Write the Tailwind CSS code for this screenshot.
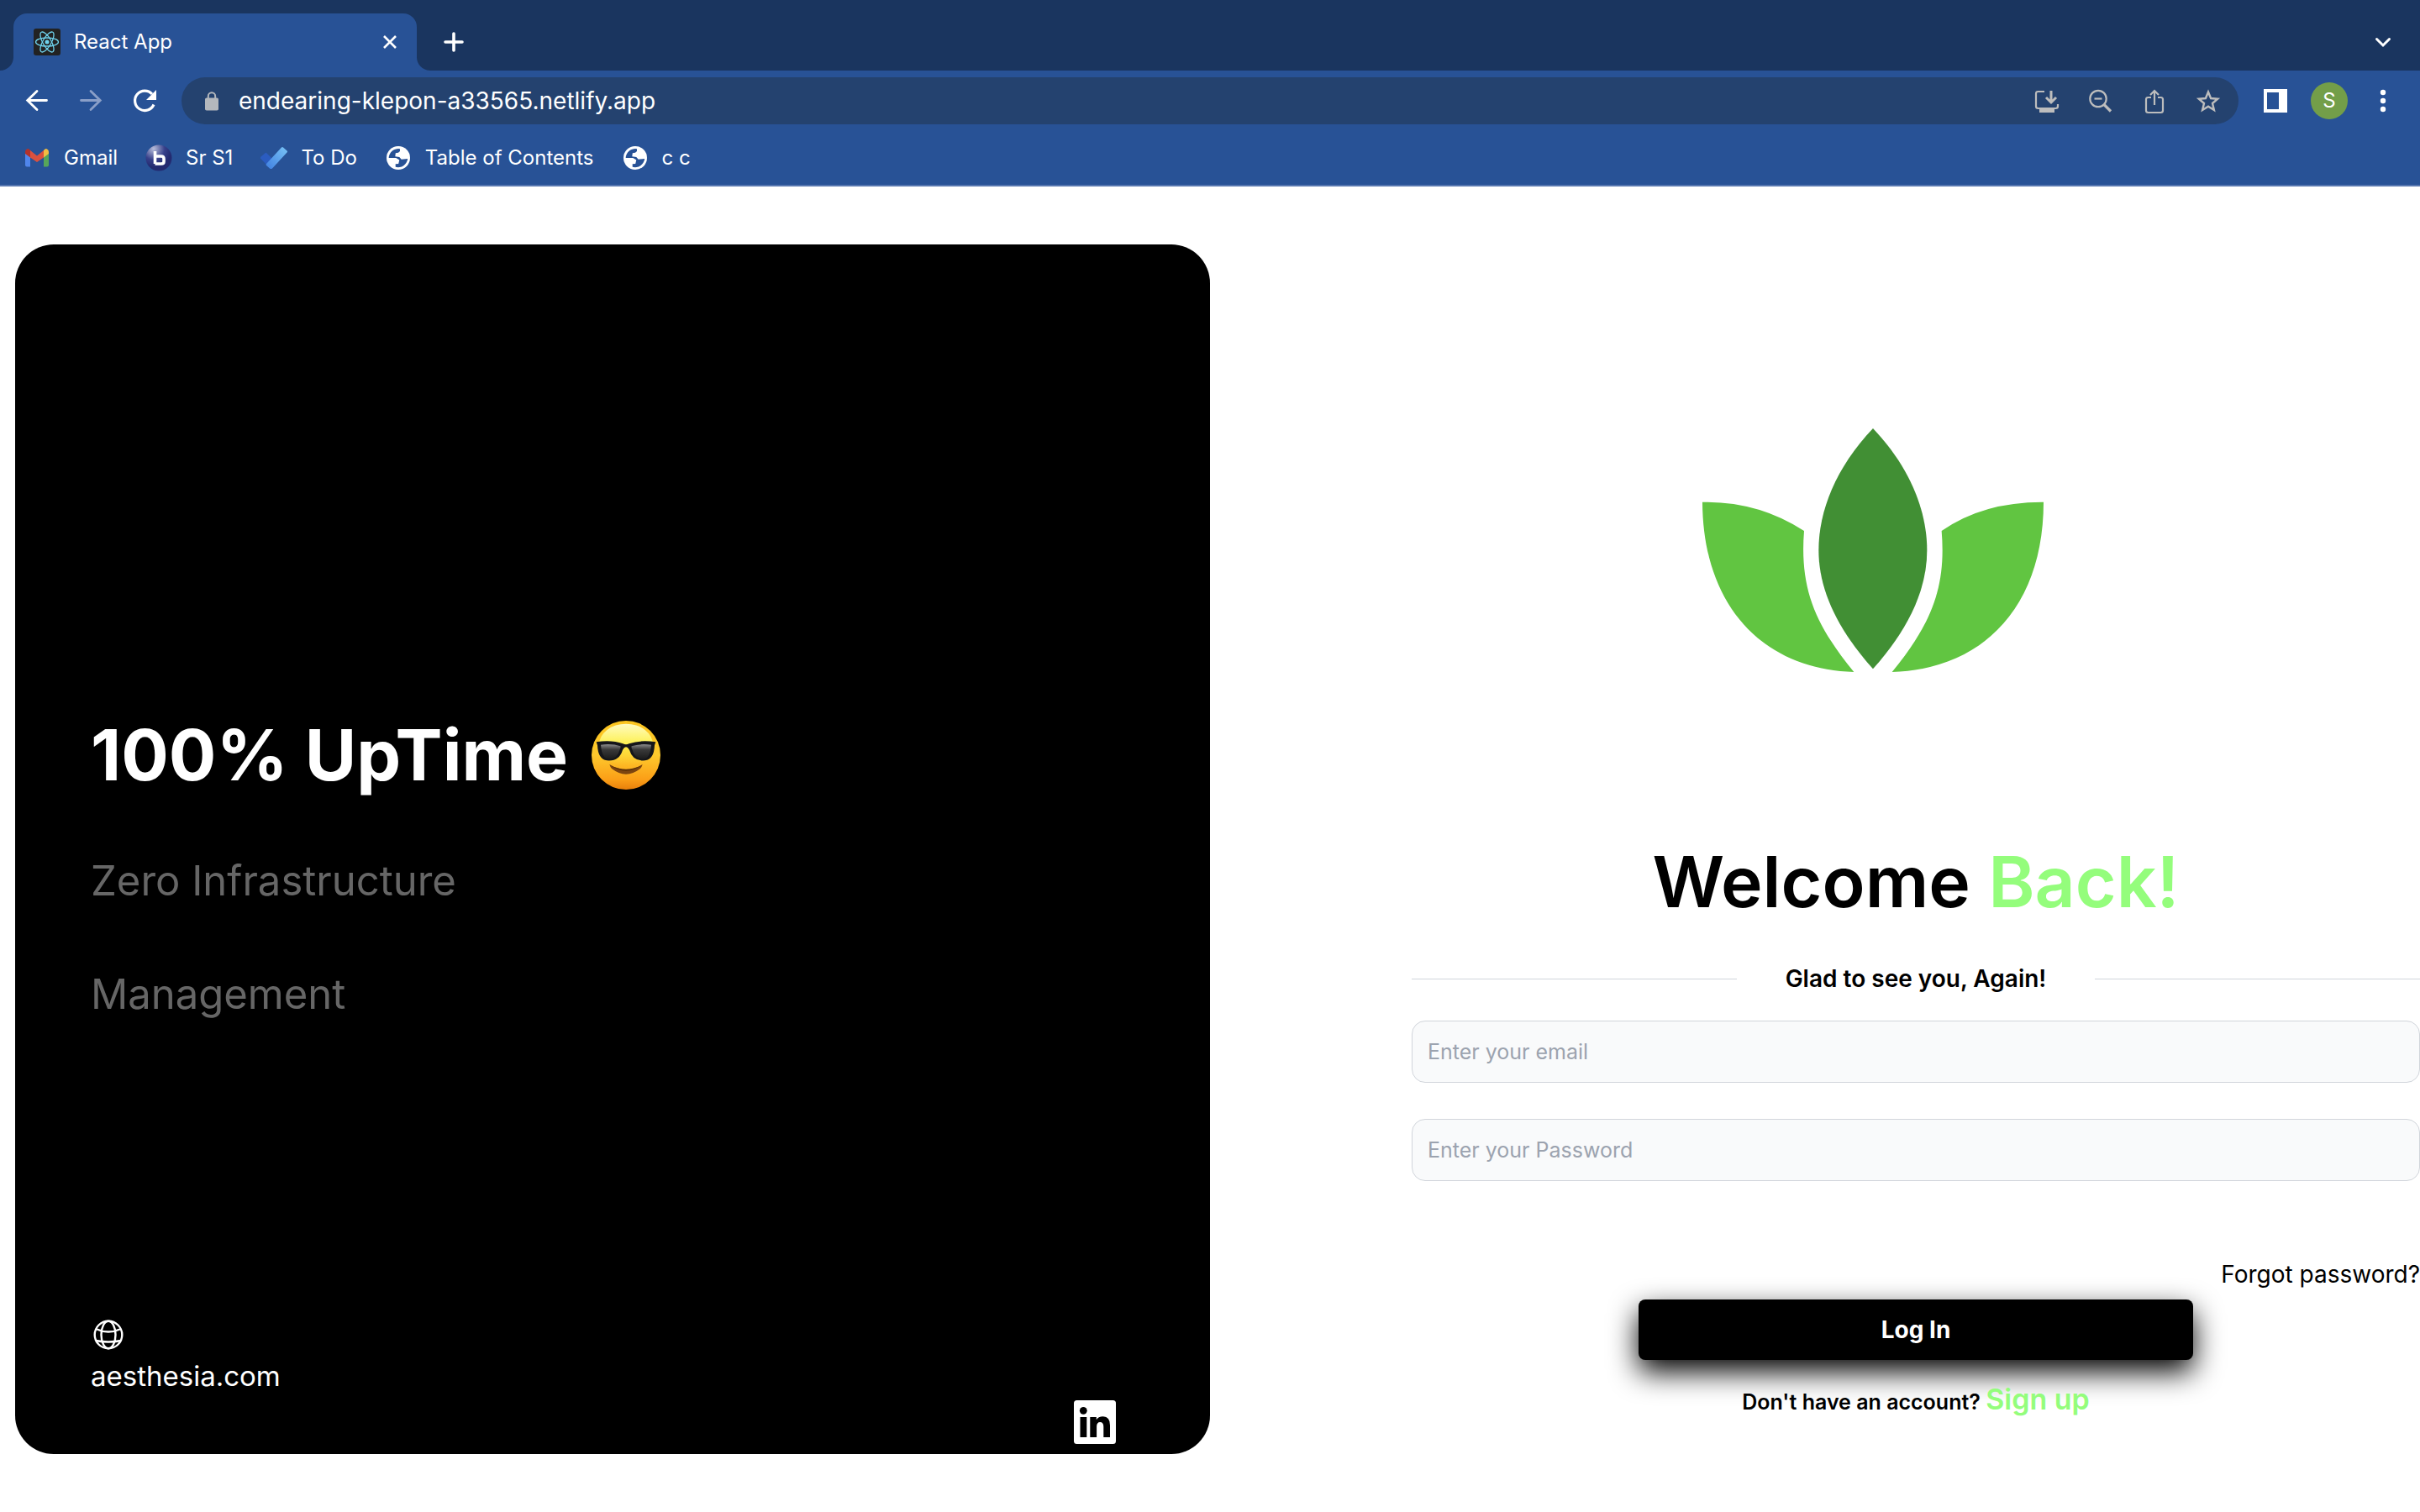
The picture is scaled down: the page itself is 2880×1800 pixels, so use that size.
<!DOCTYPE html>
<html lang="en">
<head>
<meta charset="utf-8">
<title>React App</title>
<script src="https://cdn.jsdelivr.net/npm/@tailwindcss/browser@4"></script>
</head>
<body class="flex min-h-screen flex-col bg-white font-['Inter',sans-serif] text-black">

<!-- Browser chrome -->
<header class="border-b-2 border-[#5777b0] bg-[#285296] text-white">
  <!-- Tab strip -->
  <div class="flex h-[84px] items-end bg-[#1a355f] pl-4 pr-7">
    <div class="relative flex h-[68px] w-[480px] items-center rounded-t-2xl bg-[#285296] pl-6 pr-5 text-[24px]">
      <svg class="absolute -left-4 bottom-0 size-4" viewBox="0 0 16 16" fill="#285296"><path d="M16 0v16H0A16 16 0 0 0 16 0z"/></svg>
      <svg class="absolute -right-4 bottom-0 size-4" viewBox="0 0 16 16" fill="#285296"><path d="M0 0v16h16A16 16 0 0 1 0 0z"/></svg>
      <svg class="size-8 shrink-0" viewBox="0 0 32 32" fill="none" stroke="#6fd3ee" stroke-width="1.3">
        <rect width="32" height="32" rx="3" fill="#222" stroke="none"/>
        <ellipse cx="16" cy="16" rx="13.5" ry="5"/>
        <ellipse cx="16" cy="16" rx="13.5" ry="5" transform="rotate(60 16 16)"/>
        <ellipse cx="16" cy="16" rx="13.5" ry="5" transform="rotate(120 16 16)"/>
        <circle cx="16" cy="16" r="2.5" fill="#6fd3ee" stroke="none"/>
      </svg>
      <span class="ml-4 flex-1">React App</span>
      <button class="flex size-6 items-center justify-center" aria-label="Close tab">
        <svg class="size-4" viewBox="0 0 16 16" stroke="currentColor" stroke-width="2.6"><path d="M1 1l14 14M15 1L1 15"/></svg>
      </button>
    </div>
    <button class="ml-7 flex h-[68px] w-8 items-center justify-center" aria-label="New tab">
      <svg class="size-6" viewBox="0 0 24 24" stroke="currentColor" stroke-width="3.6" stroke-linecap="round"><path d="M12 2v20M2 12h20"/></svg>
    </button>
    <button class="ml-auto flex h-[68px] w-8 items-center justify-center" aria-label="Search tabs">
      <svg class="size-5" viewBox="0 0 20 20" fill="none" stroke="currentColor" stroke-width="3" stroke-linecap="round"><path d="M2.5 6.5l7.500 7.500 7.500-7.500"/></svg>
    </button>
  </div>

  <!-- Toolbar -->
  <div class="flex h-[72px] items-center pl-7 pr-7">
    <nav class="flex gap-8" aria-label="History">
      <button aria-label="Back"><svg class="size-8" viewBox="0 0 32 32" fill="none" stroke="#fff" stroke-width="2.8" stroke-linecap="round"><path d="M27.500 15.500H5M16 4.500L4.700 15.500 16 26.500"/></svg></button>
      <button aria-label="Forward"><svg class="size-8" viewBox="0 0 32 32" fill="none" stroke="#8a9fc8" stroke-width="2.8" stroke-linecap="round"><path d="M4.500 15.500H27M16 4.500l11.300 11L16 26.500"/></svg></button>
      <button aria-label="Reload"><svg class="size-8" viewBox="0 0 32 32" fill="none" stroke="#fff" stroke-width="3.200"><path d="M27 20.500A11.700 11.700 0 1 1 25 8"/><path d="M30 3v12H18z" fill="#fff" stroke="none"/></svg></button>
    </nav>
    <div class="ml-7 flex h-14 flex-1 items-center rounded-full bg-[#24426f] pl-5 pr-5">
      <svg class="size-8 shrink-0" viewBox="0 0 32 32"><rect x="8" y="12.500" width="16" height="15" rx="1.800" fill="#b4b8bd"/><path d="M11.800 14v-3.500a4.200 4.200 0 0 1 8.400 0V14" fill="none" stroke="#b4b8bd" stroke-width="2"/></svg>
      <input type="text" aria-label="Address" value="endearing-klepon-a33565.netlify.app" class="ml-4 min-w-0 flex-1 bg-transparent text-[28px] outline-none">
      <div class="flex gap-8 text-[#bdbdbd]">
        <button aria-label="Install app"><svg class="size-8" viewBox="0 0 32 32" fill="none" stroke="currentColor" stroke-width="2.200"><path d="M13 5H5.500Q3 5 3 7.500v15Q3 25 5.500 25h21q2.500 0 2.500-2.500V20"/><path d="M21 4v13M15 12l6 6 6-6" stroke-width="3"/><path d="M7 25h18v5H7z" fill="currentColor" stroke="none"/></svg></button>
        <button aria-label="Zoom"><svg class="size-8" viewBox="0 0 32 32" fill="none" stroke="currentColor" stroke-width="2.200"><circle cx="13" cy="13.500" r="9.700"/><path d="M8.500 13.500h9"/><path d="M20 20.500l8 8" stroke-width="3.200"/></svg></button>
        <button aria-label="Share"><svg class="size-8" viewBox="0 0 32 32" fill="none" stroke="currentColor" stroke-width="2.200"><path d="M12 12H8.500Q6 12 6 14.500v13Q6 30 8.500 30h15q2.500 0 2.500-2.500v-13Q26 12 23.500 12H20"/><path d="M16 21V4.500M11 9l5-5 5 5"/></svg></button>
        <button aria-label="Bookmark"><svg class="size-8" viewBox="0 0 32 32" fill="none" stroke="currentColor" stroke-width="2.400"><path d="M16 5.500l3.100 7.500 8.100.7-6.200 5.300 1.900 8L16 22.700 9.100 27l1.900-8-6.200-5.300 8.100-.7z"/></svg></button>
      </div>
    </div>
    <div class="ml-7 flex items-center gap-[26px]">
      <button aria-label="Side panel"><svg class="size-8" viewBox="0 0 32 32"><path fill="#fff" fill-rule="evenodd" d="M2 2h28v28H2zM6 6v20h14V6z"/></svg></button>
      <button class="flex size-11 items-center justify-center rounded-full bg-[#739e49] text-[24px]" aria-label="Profile">S</button>
      <button aria-label="Menu"><svg class="size-8" viewBox="0 0 32 32" fill="#fff"><circle cx="16" cy="6" r="3.200"/><circle cx="16" cy="16" r="3.200"/><circle cx="16" cy="26" r="3.200"/></svg></button>
    </div>
  </div>

  <!-- Bookmarks -->
  <nav class="flex h-16 items-center gap-[33px] px-7 text-[24px]" aria-label="Bookmarks">
    <a href="#" class="flex items-center gap-4">
      <svg class="size-8" viewBox="0 0 32 32"><path d="M2 11h6v15.500H4q-2 0-2-2z" fill="#5086ec"/><path d="M24 11h6v13.500q0 2-2 2h-4z" fill="#57a65a"/><path d="M8 7l8 6.500L24 7v8.500L16 21l-8-5.500z" fill="#d9513f"/><path d="M2 9q0-3 3-4 1.500 0 3 2v8.500L2 11z" fill="#b3322a"/><path d="M30 9q0-3-3-4-1.500 0-3 2v8.500l6-4.500z" fill="#f2bd42"/></svg>Gmail</a>
    <a href="#" class="flex items-center gap-4">
      <svg class="size-8" viewBox="0 0 32 32"><defs><radialGradient id="orb" cx=".3" cy=".15" r=".7"><stop offset="0" stop-color="#b9bfdc"/><stop offset=".6" stop-color="#37408a"/><stop offset="1" stop-color="#232a70"/></radialGradient></defs><circle cx="16" cy="16" r="15.500" fill="url(#orb)"/><path d="M11.500 8v15M11.500 14H19q3 0 3 3v3.500q0 2.500-3 2.500h-7.500" fill="none" stroke="#fff" stroke-width="3.600"/></svg>Sr S1</a>
    <a href="#" class="flex items-center gap-4">
      <svg class="size-8" viewBox="0 0 32 32"><defs><linearGradient id="tick" x1="0" y1="1" x2="1" y2="0"><stop offset="0" stop-color="#3f7fe0"/><stop offset="1" stop-color="#79c4f6"/></linearGradient></defs><path d="M6.500 9.500l9 9-6 8-9.500-10q-.5-1 .5-2z" fill="#2b5cc0"/><path d="M7 23L25 3.500q1-1 2 0l4.500 4q1 1 0 2L14 28.500q-1.500 1-3 0L7 25q-.8-1 0-2z" fill="url(#tick)"/></svg>To Do</a>
    <a href="#" class="flex items-center gap-4">
      <svg class="size-8" viewBox="0 0 32 32"><circle cx="16" cy="16" r="14" fill="#fff"/><path fill="#285296" d="M4.700 16A11.300 11.300 0 0 1 18 5.300V8l-2 1.800-3.200.5-.5 4L17.300 15l2.400 2.700 7.500-.8A11.500 11.500 0 0 1 12.700 26.800v-3.500l3.500-.3 1.100-4.500L13.300 16z"/></svg>Table of Contents</a>
    <a href="#" class="flex items-center gap-4">
      <svg class="size-8" viewBox="0 0 32 32"><circle cx="16" cy="16" r="14" fill="#fff"/><path fill="#285296" d="M4.700 16A11.300 11.300 0 0 1 18 5.300V8l-2 1.800-3.200.5-.5 4L17.300 15l2.400 2.700 7.500-.8A11.500 11.500 0 0 1 12.700 26.800v-3.500l3.500-.3 1.100-4.500L13.300 16z"/></svg>c c</a>
  </nav>
</header>

<!-- Login page -->
<main class="grid flex-1 grid-cols-2">
  <section class="flex py-[69px] pl-[18px]">
    <div class="flex flex-1 flex-col rounded-[46px] bg-black px-[90px] pb-3 pt-[556px] text-white">
      <h1 class="flex items-center gap-7 text-[84px] font-bold leading-[104px]">100% UpTime
        <svg class="size-[82px]" viewBox="45 51 246 246" role="img" aria-label="Smiling face with sunglasses">
          <defs>
            <linearGradient id="face" x1="0" y1="0" x2="0" y2="1"><stop offset="0" stop-color="#fcc51f"/><stop offset=".5" stop-color="#fec92d"/><stop offset=".85" stop-color="#fb9f17"/><stop offset="1" stop-color="#e8800c"/></linearGradient>
            <linearGradient id="shine" x1="0" y1="0" x2="0" y2="1"><stop offset="0" stop-color="#fffbc0"/><stop offset=".5" stop-color="#fdf04e"/><stop offset="1" stop-color="#fdd835" stop-opacity="0"/></linearGradient>
            <linearGradient id="lens" x1="0" y1="0" x2="0" y2="1"><stop offset="0" stop-color="#8a8a8a"/><stop offset=".35" stop-color="#3a3a3a"/><stop offset="1" stop-color="#1c1c1c"/></linearGradient>
          </defs>
          <circle cx="168" cy="174" r="123" fill="url(#face)"/>
          <ellipse cx="168" cy="136" rx="96" ry="74" fill="url(#shine)"/>
          <path d="M62 127q55-8 95 6 11 6 22 0 40-14 95-6l-4 12q-2 50-34 54-44 4-56-38-12-20-24 0-12 42-56 38-32-4-34-54z" fill="#15161a"/>
          <path d="M78 137q40-5 70 5 2 4-2 12-10 36-42 33-22-2-26-50zM258 137q-40-5-70 5-2 4 2 12 10 36 42 33 22-2 26-50z" fill="url(#lens)"/>
          <path d="M109 207q59 36 118 0-2 8-8 15-51 40-102 0-6-7-8-15z" fill="#7d4510"/>
          <path d="M112 210q56 40 112 0-56 29-112 0z" fill="#5b3008"/>
        </svg>
      </h1>
      <p class="mt-[30px] text-[49px] leading-[135px] text-[#666]">Zero Infrastructure<br>Management</p>
      <footer class="mt-auto flex flex-col gap-[9px]">
        <svg class="size-10" viewBox="0 0 40 40" fill="none" stroke="#fff" stroke-width="2.400"><circle cx="21" cy="20" r="16.300"/><ellipse cx="21" cy="20" rx="8.500" ry="16.300"/><path d="M6 13q15 7 30 0M6 27q15 3 30 0"/></svg>
        <a href="#" class="text-[33px] leading-10">aesthesia.com</a>
        <a href="#" class="mr-[22px] self-end" aria-label="LinkedIn">
          <svg class="h-[52px] w-[50px]" viewBox="0 0 50 52"><rect width="50" height="52" rx="3.500" fill="#fff"/><circle cx="11.300" cy="12.300" r="4.400"/><path d="M7.500 20h7.800v24H7.500zM19.300 20h7.500v3.300q2.200-4 8-4 8.200 0 8.200 10.500V44h-7.700V31.500q0-5.500-4.100-5.500t-4.100 5.500V44h-7.800z"/></svg>
        </a>
      </footer>
    </div>
  </section>

  <section class="flex flex-col pl-[240px] pt-[258px]">
    <svg class="mr-[100px] h-[350px] w-[500px] self-center" viewBox="0 0 1500 1050" role="img" aria-label="Leaf logo">
      <path fill="#418f34" d="M747 90C880 230 940 385 940 525 940 660 880 800 747 949 614 800 553 660 553 525 553 385 614 230 747 90z"/>
      <path fill="#61c541" d="M138 353Q340 350 501 456C485 660 540 790 679 960 350 950 140 720 138 353z"/>
      <path fill="#61c541" d="M1356 353Q1140 352 992 456C1009 660 954 790 815 960 1146 950 1356 720 1356 353z"/>
    </svg>
    <h2 class="mt-[168px] text-center text-[84px] font-semibold leading-[104px]">Welcome <span class="text-[#94fd7c]">Back!</span></h2>
    <form class="flex flex-col">
      <div class="mt-[45px] flex items-center gap-[58px]">
        <hr class="flex-1 border-[#d1d5db]">
        <p class="text-[28px] font-semibold leading-9">Glad to see you, Again!</p>
        <hr class="flex-1 border-[#d1d5db]">
      </div>
      <input type="email" aria-label="Email" placeholder="Enter your email" class="mt-8 h-[74px] rounded-2xl border border-[#d1d5db] bg-[#f9fafb] px-[18px] text-[25px] placeholder:text-[#9ca3af]">
      <input type="password" aria-label="Password" placeholder="Enter your Password" class="mt-[43px] h-[74px] rounded-2xl border border-[#d1d5db] bg-[#f9fafb] px-[18px] text-[25px] placeholder:text-[#9ca3af]">
      <a href="#" class="mt-[93px] self-end text-[28px] leading-9">Forgot password?</a>
      <button type="submit" class="mt-3 h-[72px] w-[55%] self-center rounded-lg bg-black text-[28px] font-bold text-white shadow-[0_14px_34px_#000]">Log In</button>
      <p class="relative mt-[25px] text-center text-[25px] font-semibold leading-[44px]">Don't have an account? <a href="#" class="text-[34px] text-[#94fd7c]">Sign up</a></p>
    </form>
  </section>
</main>
</body>
</html>
